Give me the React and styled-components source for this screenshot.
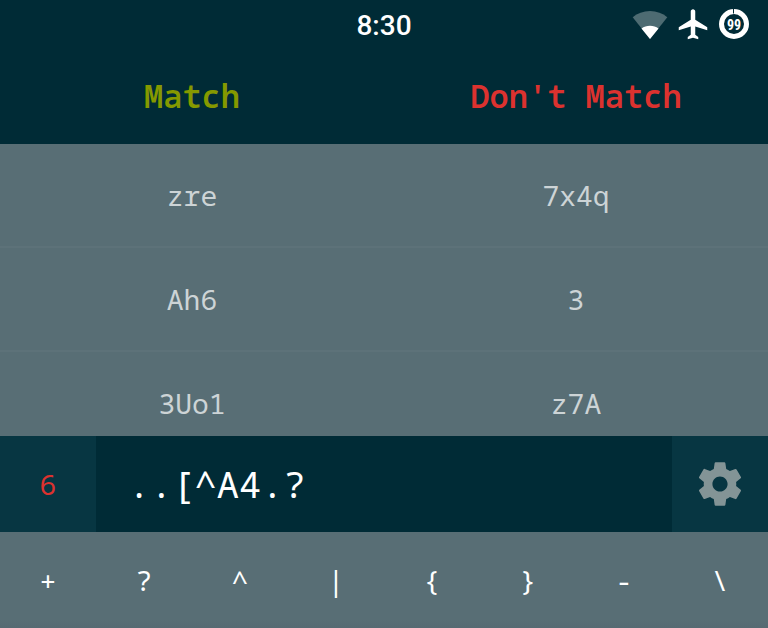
import React, { useState } from "react";
import styled, { createGlobalStyle } from "styled-components";

const mono = `"Droid Sans Mono", "Noto Sans Mono", "DejaVu Sans Mono", monospace`;

const color = {
  base03: "#002b36",
  base02: "#073642",
  base01: "#586e75",
  line: "#5d7279",
  base0: "#839496",
  text: "#cdd4d6",
  green: "#859900",
  red: "#dc322f",
};

const GlobalStyle = createGlobalStyle`
  *, *::before, *::after { box-sizing: border-box; }
  body { margin: 0; background: ${color.base01}; }
`;

const Screen = styled.main`
  display: flex;
  flex-direction: column;
  height: 100vh;
  background: ${color.base01};
  font-family: ${mono};
`;

const StatusBar = styled.header`
  display: grid;
  grid-template-columns: 1fr auto 1fr;
  align-items: center;
  height: 48px;
  padding: 0 18px;
  flex: none;
  background: ${color.base03};
  color: #fff;
`;

const Clock = styled.time`
  grid-column: 2;
  font: 500 28px/48px Roboto, sans-serif;
  padding-top: 2px;
`;

const StatusIcons = styled.div`
  display: flex;
  justify-content: flex-end;
  align-items: center;
  gap: 10px;

  svg { display: block; }
`;

const WordArea = styled.section`
  flex: 1;
  min-height: 0;
  overflow: hidden;
`;

const WordTable = styled.table`
  width: 100%;
  table-layout: fixed;
  border-collapse: separate;
  border-spacing: 0;
`;

const Heading = styled.th`
  height: 96px;
  padding: 0;
  background: ${color.base03};
  color: ${({ $tone }) => color[$tone]};
  font-size: 32px;
  font-weight: 600;
  line-height: 40px;
`;

const Word = styled.td`
  height: 104px;
  padding: 0;
  border-bottom: 2px solid ${color.line};
  color: ${color.text};
  font-size: 28px;
  line-height: 32px;
  text-align: center;
`;

const EntryBar = styled.form`
  display: flex;
  flex: none;
  height: 96px;
  background: ${color.base03};
`;

const Score = styled.output`
  display: grid;
  place-items: center;
  width: 96px;
  flex: none;
  background: ${color.base02};
  color: ${color.red};
  font-size: 28px;
`;

const PatternInput = styled.input`
  flex: 1;
  min-width: 0;
  padding: 0 32px 2px;
  border: 0;
  outline: 0;
  background: transparent;
  color: #fff;
  font-family: inherit;
  font-size: 37px;
`;

const SettingsButton = styled.button`
  display: grid;
  place-items: center;
  width: 96px;
  flex: none;
  padding: 0;
  border: 0;
  background: ${color.base02};
  color: ${color.base0};
`;

const KeyRow = styled.div`
  display: flex;
  flex: none;
  height: 96px;
  background: linear-gradient(${color.base01} 88px, #566a72);
`;

const Key = styled.button`
  flex: 1;
  padding: 0;
  border: 0;
  background: transparent;
  color: #fff;
  font-family: inherit;
  font-size: 28px;
  line-height: 32px;
`;

const BatteryLabel = styled.text`
  font: 700 14px "Roboto Condensed", Roboto, sans-serif;
  fill: #fff;
`;

const WifiIcon = () => (
  <svg width="36" height="30" viewBox="0 0 36 30" aria-label="Wi-Fi">
    <path d="M18 29 .7 7.2C5.4 3.3 11.3 1 18 1s12.6 2.3 17.3 6.2Z" fill="#4d6b72" />
    <path d="m18 29-8.500-10.500c2.300-1.800 5.300-2.800 8.500-2.800s6.200 1 8.500 2.800Z" fill="#fff" />
  </svg>
);

const PlaneIcon = () => (
  <svg width="30" height="32" viewBox="1.500 1.800 20 21.300" aria-label="Airplane mode">
    <path fill="#fff" d="M21 16v-2l-8-5V3.500c0-.83-.67-1.500-1.500-1.500S10 2.670 10 3.500V9l-8 5v2l8-2.500V19l-2 1.500V22l3.500-1 3.500 1v-1.500L13 19v-5.500z" />
  </svg>
);

const BatteryIcon = () => (
  <svg width="32" height="32" viewBox="0 1 32 32" aria-label="Battery 99 percent">
    <circle cx="16" cy="16" r="12.500" fill="none" stroke="#fff" strokeWidth="5" />
    <path d="M15.500 1v4.500" stroke="#002b36" strokeWidth="1" />
    <BatteryLabel x="16" y="22" textAnchor="middle">99</BatteryLabel>
  </svg>
);

const GearIcon = () => (
  <svg width="52" height="52" viewBox="0 0 24 24" aria-hidden="true">
    <path fill="currentColor" d="M19.430 12.980c.04-.32.07-.64.07-.98s-.03-.66-.07-.98l2.110-1.650c.19-.15.24-.42.120-.64l-2-3.460c-.12-.22-.39-.3-.61-.22l-2.490 1c-.52-.4-1.080-.73-1.690-.98l-.38-2.650C14.460 2.180 14.250 2 14 2h-4c-.25 0-.46.18-.49.42l-.38 2.650c-.61.25-1.170.59-1.690.98l-2.490-1c-.23-.09-.49 0-.61.22l-2 3.460c-.13.22-.07.49.12.64l2.110 1.650c-.04.32-.07.65-.07.98s.03.66.07.98l-2.110 1.650c-.19.15-.24.42-.12.64l2 3.460c.12.22.39.3.61.22l2.490-1c.52.4 1.080.73 1.690.98l.38 2.650c.03.24.24.42.49.42h4c.25 0 .46-.18.49-.42l.38-2.650c.61-.25 1.170-.59 1.690-.98l2.490 1c.23.09.49 0 .61-.22l2-3.460c.12-.22.07-.49-.12-.64zM12 15.500c-1.930 0-3.500-1.570-3.500-3.500s1.570-3.500 3.500-3.500 3.500 1.570 3.500 3.500-1.570 3.500-3.500 3.500z" />
  </svg>
);

const words = [
  ["zre", "7x4q"],
  ["Ah6", "3"],
  ["3Uo1", "z7A"],
];
const keys = ["+", "?", "^", "|", "{", "}", "-", "\\"];

export default function App() {
  const [pattern, setPattern] = useState("..[^A4.?");

  return (
    <Screen>
      <GlobalStyle />
      <StatusBar>
        <Clock>8:30</Clock>
        <StatusIcons>
          <WifiIcon />
          <PlaneIcon />
          <BatteryIcon />
        </StatusIcons>
      </StatusBar>
      <WordArea>
        <WordTable>
          <thead>
            <tr>
              <Heading scope="col" $tone="green">Match</Heading>
              <Heading scope="col" $tone="red">Don't Match</Heading>
            </tr>
          </thead>
          <tbody>
            {words.map(([match, other]) => (
              <tr key={match}>
                <Word>{match}</Word>
                <Word>{other}</Word>
              </tr>
            ))}
          </tbody>
        </WordTable>
      </WordArea>
      <EntryBar onSubmit={(e) => e.preventDefault()}>
        <Score htmlFor="pattern">6</Score>
        <PatternInput
          id="pattern"
          aria-label="Pattern"
          spellCheck={false}
          value={pattern}
          onChange={(e) => setPattern(e.target.value)}
        />
        <SettingsButton type="button" aria-label="Settings">
          <GearIcon />
        </SettingsButton>
      </EntryBar>
      <KeyRow>
        {keys.map((k) => (
          <Key key={k} type="button" onClick={() => setPattern(pattern + k)}>
            {k}
          </Key>
        ))}
      </KeyRow>
    </Screen>
  );
}
